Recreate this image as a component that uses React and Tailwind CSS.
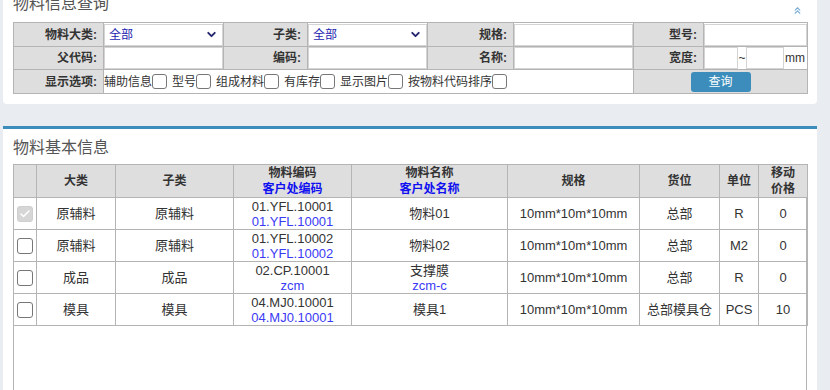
import { ChevronDown, ChevronsUp, Check } from "lucide-react";

const font = { fontFamily: '"Liberation Sans", "Noto Sans CJK SC", sans-serif' };

const rows = [
  { big: "原辅料", sub: "原辅料", code: "01.YFL.10001", ccode: "01.YFL.10001", name: "物料01", cname: "", spec: "10mm*10m*10mm", loc: "总部", unit: "R", price: "0", disabled: true },
  { big: "原辅料", sub: "原辅料", code: "01.YFL.10002", ccode: "01.YFL.10002", name: "物料02", cname: "", spec: "10mm*10m*10mm", loc: "总部", unit: "M2", price: "0" },
  { big: "成品", sub: "成品", code: "02.CP.10001", ccode: "zcm", name: "支撑膜", cname: "zcm-c", spec: "10mm*10m*10mm", loc: "总部", unit: "R", price: "0" },
  { big: "模具", sub: "模具", code: "04.MJ0.10001", ccode: "04.MJ0.10001", name: "模具1", cname: "", spec: "10mm*10m*10mm", loc: "总部模具仓", unit: "PCS", price: "10" },
];

const Label = ({ children }) => (
  <td className="border border-[#b4b4b4] bg-[#dedede] text-right pr-[6px] font-bold text-[12px] text-[#333]">{children}</td>
);

const Field = ({ children }) => (
  <td className="border border-[#b4b4b4] bg-white p-0">
    <div className="h-[22px] border border-[#d4d4d4] bg-white flex items-center">{children}</div>
  </td>
);

const Select = () => (
  <Field>
    <span className="flex-1 pl-[4px] text-[12px] text-[#1c1cb0]">全部</span>
    <ChevronDown size={13} strokeWidth={3.5} className="mr-[4px] text-[#23236e]" />
  </Field>
);

const Box = ({ disabled }) =>
  disabled ? (
    <div className="w-[16px] h-[16px] rounded-[3px] bg-[#d6d6d6] border border-[#cfcfcf] flex items-center justify-center">
      <Check size={12} strokeWidth={3} className="text-white" />
    </div>
  ) : (
    <div className="w-[16px] h-[16px] rounded-[3px] border border-[#777] bg-white" />
  );

const Opt = ({ label }) => (
  <span className="flex items-center mr-[5px]">
    <span>{label}</span>
    <span className="w-[15px] h-[15px] rounded-[3px] border border-[#777] bg-white inline-block" />
  </span>
);

export default function App() {
  return (
    <div className="w-[830px] h-[390px] overflow-hidden bg-[#e9edf2]" style={font}>
      <div className="-mt-[12px] ml-[3px] w-[814px] bg-white rounded-[4px] pt-[4px] px-[10px] pb-[10px]">
        <div className="flex items-center justify-between h-[24px] mb-[6px]">
          <span className="text-[16px] text-[#555] leading-[24px]">物料信息查询</span>
          <ChevronsUp size={11} strokeWidth={2.5} className="text-[#7aaed6] mr-[4px] mt-[12px]" />
        </div>
        <table className="border-collapse table-fixed w-[794px]">
          <colgroup>
            <col className="w-[90px]" />
            <col className="w-[120px]" />
            <col className="w-[84px]" />
            <col className="w-[120px]" />
            <col className="w-[86px]" />
            <col className="w-[120px]" />
            <col className="w-[70px]" />
            <col className="w-[104px]" />
          </colgroup>
          <tbody>
            <tr className="h-[24px]">
              <Label>物料大类:</Label>
              <Select />
              <Label>子类:</Label>
              <Select />
              <Label>规格:</Label>
              <Field />
              <Label>型号:</Label>
              <Field />
            </tr>
            <tr className="h-[23px]">
              <Label>父代码:</Label>
              <Field />
              <Label>编码:</Label>
              <Field />
              <Label>名称:</Label>
              <Field />
              <Label>宽度:</Label>
              <td className="border border-[#b4b4b4] bg-white p-0">
                <div className="flex items-center h-[22px] text-[12px] text-[#333]">
                  <div className="w-[34px] h-full border border-[#d4d4d4]" />
                  <span className="w-[8px] text-center">~</span>
                  <div className="w-[38px] h-full border border-[#d4d4d4]" />
                  <span className="pl-[1px]">mm</span>
                </div>
              </td>
            </tr>
            <tr className="h-[24px]">
              <Label>显示选项:</Label>
              <td colSpan={5} className="border border-[#b4b4b4] bg-white p-0">
                <div className="flex items-center text-[12px] text-[#333]">
                  <Opt label="辅助信息" />
                  <Opt label="型号" />
                  <Opt label="组成材料" />
                  <Opt label="有库存" />
                  <Opt label="显示图片" />
                  <Opt label="按物料代码排序" />
                </div>
              </td>
              <td colSpan={2} className="border border-[#b4b4b4] bg-[#dedede] p-0">
                <div className="flex justify-center">
                  <button className="w-[60px] h-[20px] rounded-[3px] bg-[#3c8dbc] text-white text-[12px] leading-[20px]">查询</button>
                </div>
              </td>
            </tr>
          </tbody>
        </table>
      </div>

      <div className="mt-[22px] ml-[3px] w-[814px] bg-white border-t-[3px] border-[#3c8dbc] pt-[5px] px-[10px] h-[300px]">
        <div className="h-[24px] mb-[6px] text-[16px] text-[#555] leading-[24px] pt-[2px]">物料基本信息</div>
        <div className="border-x border-[#b4b4b4] h-[240px]">
          <table className="border-collapse table-fixed w-[794px] -ml-[1px] text-center text-[#333]">
            <colgroup>
              <col className="w-[23px]" />
              <col className="w-[79px]" />
              <col className="w-[118px]" />
              <col className="w-[118px]" />
              <col className="w-[156px]" />
              <col className="w-[132px]" />
              <col className="w-[80px]" />
              <col className="w-[39px]" />
              <col className="w-[49px]" />
            </colgroup>
            <thead>
              <tr className="h-[33px] bg-[#dedede] text-[12px] font-bold leading-[16px]">
                <th className="border border-[#b4b4b4]"></th>
                <th className="border border-[#b4b4b4]">大类</th>
                <th className="border border-[#b4b4b4]">子类</th>
                <th className="border border-[#b4b4b4]">
                  <div>物料编码</div>
                  <div className="text-[#1010f0]">客户处编码</div>
                </th>
                <th className="border border-[#b4b4b4]">
                  <div>物料名称</div>
                  <div className="text-[#1010f0]">客户处名称</div>
                </th>
                <th className="border border-[#b4b4b4]">规格</th>
                <th className="border border-[#b4b4b4]">货位</th>
                <th className="border border-[#b4b4b4]">单位</th>
                <th className="border border-[#b4b4b4]">
                  <div>移动</div>
                  <div>价格</div>
                </th>
              </tr>
            </thead>
            <tbody>
              {rows.map((r, i) => (
                <tr key={i} className="h-[32px] text-[13px] leading-[15px]">
                  <td className="border border-[#b4b4b4] p-0">
                    <div className="flex justify-center">
                      <Box disabled={r.disabled} />
                    </div>
                  </td>
                  <td className="border border-[#b4b4b4]">{r.big}</td>
                  <td className="border border-[#b4b4b4]">{r.sub}</td>
                  <td className="border border-[#b4b4b4]">
                    <div>{r.code}</div>
                    <div className="text-[#3a3af5]">{r.ccode}</div>
                  </td>
                  <td className="border border-[#b4b4b4]">
                    <div>{r.name}</div>
                    {r.cname && <div className="text-[#3a3af5]">{r.cname}</div>}
                  </td>
                  <td className="border border-[#b4b4b4]">{r.spec}</td>
                  <td className="border border-[#b4b4b4]">{r.loc}</td>
                  <td className="border border-[#b4b4b4]">{r.unit}</td>
                  <td className="border border-[#b4b4b4]">{r.price}</td>
                </tr>
              ))}
            </tbody>
          </table>
        </div>
      </div>
    </div>
  );
}
